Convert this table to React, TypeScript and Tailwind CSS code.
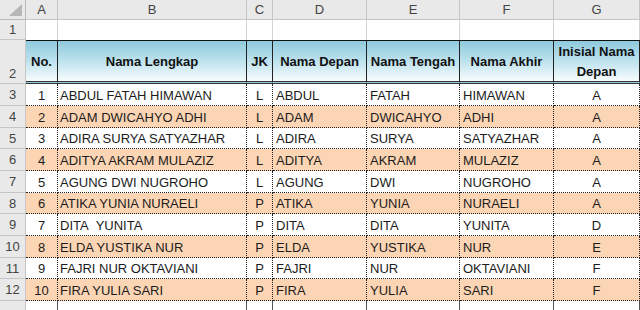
const cols = ["w-[26px]", "w-[32px]", "w-[189px]", "w-[26px]", "w-[94px]", "w-[93px]", "w-[94px]", "w-[86px]"];
const letters = ["A", "B", "C", "D", "E", "F", "G"];
const heights = ["h-[22px]", "h-[22px]", "h-[21px]", "h-[22px]", "h-[22px]", "h-[21px]", "h-[22px]", "h-[22px]", "h-[21px]", "h-[22px]"];

const data = [
  ["1", "ABDUL FATAH HIMAWAN", "L", "ABDUL", "FATAH", "HIMAWAN", "A"],
  ["2", "ADAM DWICAHYO ADHI", "L", "ADAM", "DWICAHYO", "ADHI", "A"],
  ["3", "ADIRA SURYA SATYAZHAR", "L", "ADIRA", "SURYA", "SATYAZHAR", "A"],
  ["4", "ADITYA AKRAM MULAZIZ", "L", "ADITYA", "AKRAM", "MULAZIZ", "A"],
  ["5", "AGUNG DWI NUGROHO", "L", "AGUNG", "DWI", "NUGROHO", "A"],
  ["6", "ATIKA YUNIA NURAELI", "P", "ATIKA", "YUNIA", "NURAELI", "A"],
  ["7", "DITA\u00a0 YUNITA", "P", "DITA", "DITA", "YUNITA", "D"],
  ["8", "ELDA YUSTIKA NUR", "P", "ELDA", "YUSTIKA", "NUR", "E"],
  ["9", "FAJRI NUR OKTAVIANI", "P", "FAJRI", "NUR", "OKTAVIANI", "F"],
  ["10", "FIRA YULIA SARI", "P", "FIRA", "YULIA", "SARI", "F"],
];

const headers = ["No.", "Nama Lengkap", "JK", "Nama Depan", "Nama Tengah", "Nama Akhir", "Inisial Nama Depan"];
// left aligned columns, the rest centered
const leftCols = [1, 3, 4, 5];

function RowHead({ label, bottom = false }: { label: string; bottom?: boolean }) {
  return (
    <div className={`${cols[0]} shrink-0 bg-[#e9e9e9] border-r border-b border-[#c6c6c6] flex justify-center text-[#444] ${bottom ? "items-end pb-[3px]" : "items-center"}`}>
      {label}
    </div>
  );
}

export default function App() {
  return (
    <div className="w-[640px] h-[310px] overflow-hidden bg-white text-[13px] leading-none" style={{ fontFamily: '"Liberation Sans", Arial, sans-serif' }}>
      {/* column letters */}
      <div className="flex h-[20px]">
        <div className={`${cols[0]} shrink-0 bg-[#e9e9e9] border-r border-b border-[#b8b8b8] relative`}>
          <svg width="26" height="20" className="absolute left-0 top-0">
            <polygon points="9,16 22,16 22,4" fill="#b7b7b7" />
          </svg>
        </div>
        {letters.map((l, i) => (
          <div key={l} className={`${cols[i + 1]} shrink-0 bg-[#e9e9e9] border-r border-b border-[#c6c6c6] flex items-center justify-center text-[#444]`}>
            {l}
          </div>
        ))}
      </div>

      {/* row 1 */}
      <div className="flex h-[20px]">
        <RowHead label="1" />
        {letters.map((l, i) => (
          <div key={l} className={`${cols[i + 1]} shrink-0 border-r border-[#d4d4d4]`} />
        ))}
      </div>

      {/* row 2: header */}
      <div className="flex h-[44px]">
        <RowHead label="2" bottom />
        {headers.map((h, i) => (
          <div
            key={h}
            className={`${cols[i + 1]} shrink-0 border-t border-t-[#111] border-b-[3px] border-double border-b-[#333] border-r border-r-[#222] bg-linear-to-b from-[#8ecadd] via-[#bde2ee] to-[#f8fcfd] flex items-center justify-center text-center font-bold text-[#111] leading-[20px] pt-[1px]`}
          >
            {h === "Inisial Nama Depan" ? (
              <span>
                Inisial Nama
                <br />
                Depan
              </span>
            ) : (
              h
            )}
          </div>
        ))}
      </div>

      {/* rows 3 - 12 */}
      {data.map((r, ri) => (
        <div key={ri} className={`flex ${heights[ri]}`}>
          <RowHead label={String(ri + 3)} />
          {r.map((c, ci) => (
            <div
              key={ci}
              className={`${cols[ci + 1]} shrink-0 border-r border-r-[#222] border-b border-dotted border-b-[#222] flex items-center whitespace-pre text-[#1c1c1c] pt-[1px] ${ri % 2 === 1 ? "bg-[#fcd5b4]" : "bg-white"} ${leftCols.includes(ci) ? (ci === 1 ? "pl-[2px]" : "pl-[3px]") : "justify-center"}`}
            >
              {c}
            </div>
          ))}
        </div>
      ))}

      {/* row 13, mostly below the window */}
      <div className="flex h-[22px]">
        <div className={`${cols[0]} shrink-0 bg-[#e9e9e9] border-r border-[#c6c6c6]`} />
        {letters.map((l, i) => (
          <div key={l} className={`${cols[i + 1]} shrink-0 border-r border-[#555]`} />
        ))}
      </div>
    </div>
  );
}
